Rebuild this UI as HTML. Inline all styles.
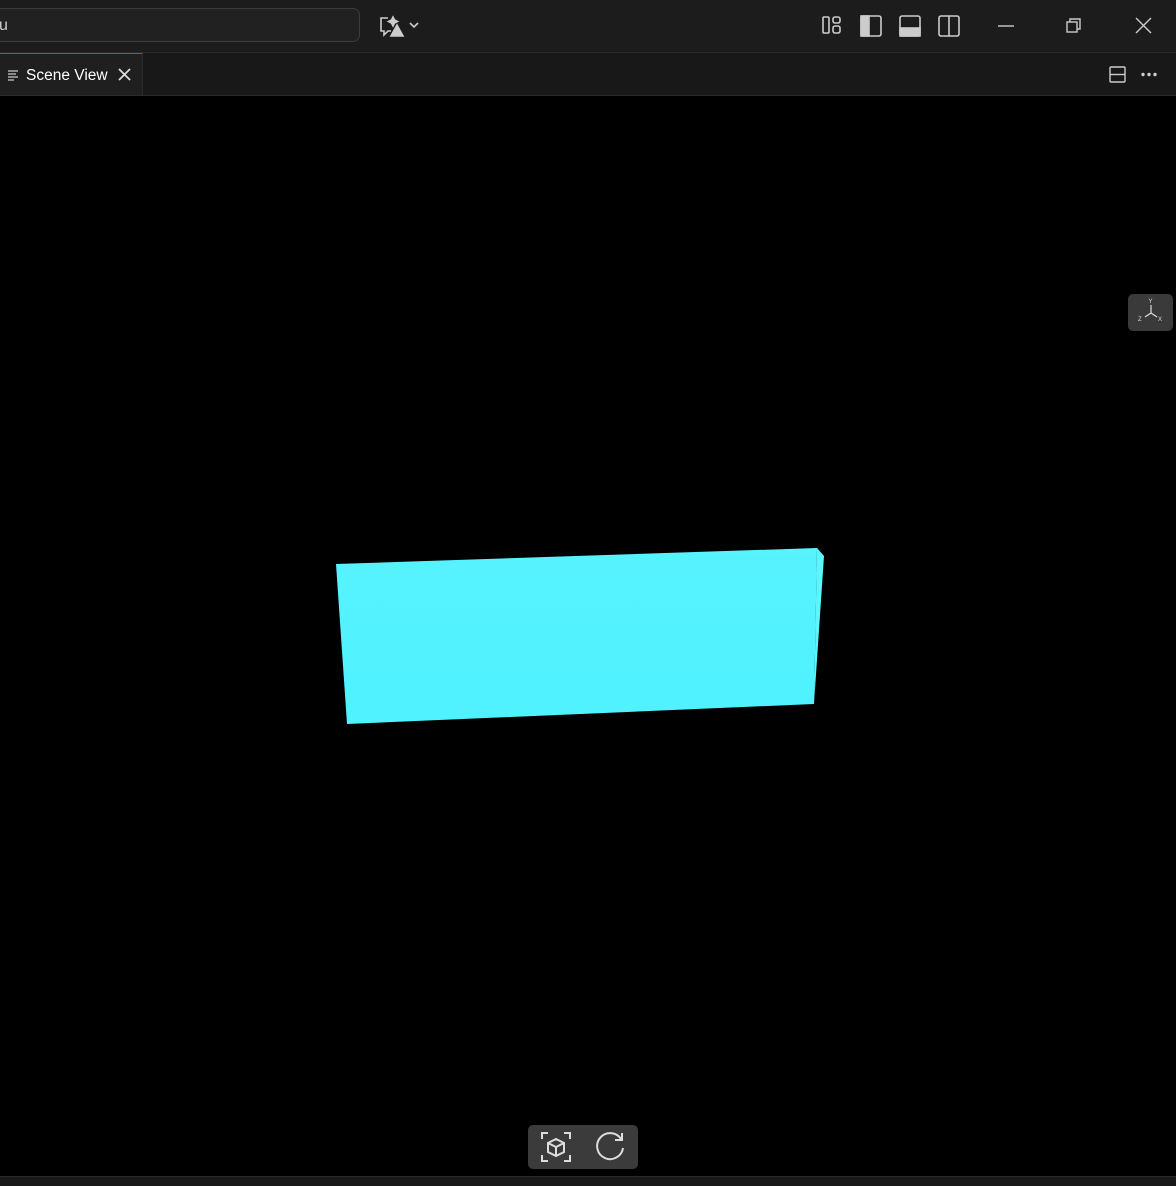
<!DOCTYPE html>
<html><head><style>
body{margin:0;width:1176px;height:1185px;background:#000;overflow:hidden;font-family:"Liberation Sans",sans-serif;position:relative}
.tb{position:absolute;left:0;top:0;width:1176px;height:52px;background:#1c1c1c;border-bottom:1px solid #2b2b2b}
.search{position:absolute;left:-10px;top:8px;width:370px;height:34px;border:1px solid #3c3c3c;border-radius:7px;background:#212121;color:#ccc;font-size:16px;line-height:34px;box-sizing:border-box;padding-left:8px}
.tabs{position:absolute;left:0;top:53px;width:1176px;height:42px;background:#181818;border-bottom:1px solid #2b2b2b}
.tab{position:absolute;left:0;top:0;width:143px;height:42px;background:#1f1f1f;border-top:1px solid #0078d4;border-right:1px solid #2b2b2b;box-sizing:border-box;color:#fff;font-size:15.5px}
svg{position:absolute}
.bot{position:absolute;left:0;top:1176px;width:1176px;height:9px;background:#181818;border-top:1px solid #2b2b2b}
</style></head><body>
<div class="tb"><div class="search">u</div>
<svg style="left:378px;top:12px" width="46" height="28" viewBox="0 0 46 28" fill="none" stroke="#ccc" stroke-width="1.6"><path d="M10 6H3v13h3v4l4-4h3"/><path d="M15 5l1.5 3 3 1.5-3 1.5-1.5 3-1.5-3-3-1.5 3-1.5z" fill="#ccc"/><path d="M19 13l-6 11h12z" fill="#ccc"/><path d="M32 11l4 4 4-4"/></svg>
<svg style="left:820px;top:14px" width="150" height="24" fill="none" stroke="#ccc" stroke-width="1.6">
<rect x="3" y="3" width="6" height="16" rx="1"/><rect x="13" y="3" width="7" height="6" rx="2"/><rect x="13" y="12" width="7" height="7" rx="2"/>
<rect x="41" y="2" width="20" height="20" rx="2"/><rect x="41" y="2" width="8" height="20" fill="#ccc"/>
<rect x="80" y="2" width="20" height="20" rx="2"/><rect x="80" y="14" width="20" height="8" fill="#ccc"/>
<rect x="119" y="2" width="20" height="20" rx="2"/><path d="M129 2v20"/></svg>
<svg style="left:990px;top:14px" width="170" height="24" fill="none" stroke="#ccc" stroke-width="1.4">
<path d="M8 12h16"/><rect x="77" y="8" width="10" height="10"/><path d="M80 8V5h10v10h-3"/><path d="M146 4l15 15M161 4l-15 15"/></svg>
</div>
<div class="tabs"><div class="tab">
<svg style="left:7px;top:15px" width="12" height="12" stroke="#ccc" stroke-width="1.2"><path d="M1 2h10M1 5h8M1 8h10M1 11h6"/></svg>
<span style="position:absolute;left:26px;top:13px">Scene View</span>
<svg style="left:118px;top:14px" width="13" height="13" stroke="#ddd" stroke-width="1.8"><path d="M1 1l11 11M12 1L1 12"/></svg></div>
<svg style="left:1108px;top:12px" width="56" height="20" fill="none" stroke="#ccc" stroke-width="1.4"><rect x="2" y="2" width="15" height="15" rx="1"/><path d="M2 9.5h15"/><circle cx="35" cy="9.5" r="1" fill="#ccc"/><circle cx="41" cy="9.5" r="1" fill="#ccc"/><circle cx="47" cy="9.5" r="1" fill="#ccc"/></svg>
</div>
<svg style="left:0;top:0" width="1176" height="1185">
<defs><linearGradient id="g" x1="0" y1="0" x2="0" y2="1"><stop offset="0" stop-color="#57f3ff"/><stop offset="1" stop-color="#4ff2ff"/></linearGradient></defs>
<polygon points="336,564 817,548 814,704 347,724" fill="url(#g)"/>
<polygon points="817,548 824,556 814,704" fill="#5cf6ff"/>
<rect x="1128" y="294" width="45" height="37" rx="5" fill="#3a3a3a"/>
<path d="M1151 305v8l-6 4M1151 313l6 4" stroke="#ddd" stroke-width="1.2" fill="none"/>
<text x="1148.5" y="303" font-size="6" fill="#ddd" font-family="Liberation Sans">Y</text>
<text x="1138" y="321" font-size="6" fill="#ddd" font-family="Liberation Sans">Z</text>
<text x="1158" y="321" font-size="6" fill="#ddd" font-family="Liberation Sans">X</text>
<rect x="528" y="1125" width="110" height="44" rx="5" fill="#3b3b3b"/>
<g fill="none" stroke="#ddd" stroke-width="2"><path d="M542 1139v-6h6M564 1133h6v6M570 1155v6h-6M548 1161h-6v-6"/><path d="M556 1139l8 4v9l-8 4-8-4v-9z M548 1143l8 4 8-4 M556 1147v9"/>
<path d="M621 1139a13 13 0 1 0 2 9"/><path d="M622 1133v7h-7"/></g>
</svg>
<div class="bot"></div>
</body></html>
